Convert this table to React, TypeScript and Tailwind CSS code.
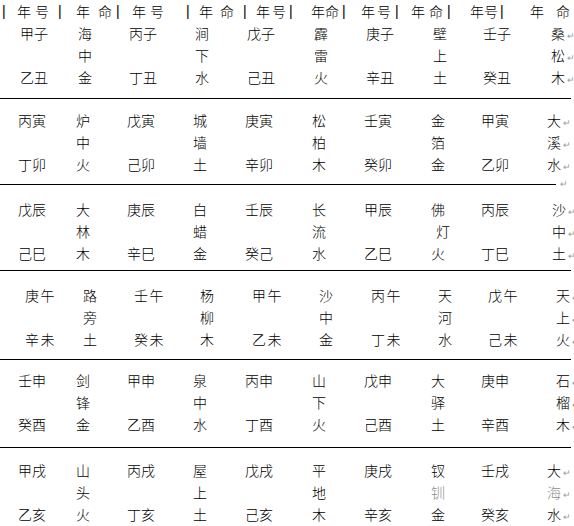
import React from "react";

const GRID =
  "grid grid-cols-[58px_51px_66px_52px_67px_52px_67px_50px_66px_1fr] leading-[22px]";

// header: pipes and "年 号 / 年 命" labels, each with its own slot width
const header: { w: string; inner?: string; chars: string[] }[] = [
  { w: "w-[15px]", chars: ["|"] },
  { w: "w-[41px]", inner: "w-[32px]", chars: ["年", "号"] },
  { w: "w-[18px]", chars: ["|"] },
  { w: "w-[40px]", inner: "w-[36px]", chars: ["年", "命"] },
  { w: "w-[16px]", chars: ["|"] },
  { w: "w-[54px]", inner: "w-[32px]", chars: ["年", "号"] },
  { w: "w-[13px]", chars: ["|"] },
  { w: "w-[44px]", inner: "w-[35px]", chars: ["年", "命"] },
  { w: "w-[13px]", chars: ["|"] },
  { w: "w-[33px]", inner: "w-[30px]", chars: ["年", "号"] },
  { w: "w-[22px]", chars: ["|"] },
  { w: "w-[31px]", inner: "w-[28px]", chars: ["年", "命"] },
  { w: "w-[19px]", chars: ["|"] },
  { w: "w-[34px]", inner: "w-[30px]", chars: ["年", "号"] },
  { w: "w-[16px]", chars: ["|"] },
  { w: "w-[36px]", inner: "w-[32px]", chars: ["年", "命"] },
  { w: "w-[23px]", chars: ["|"] },
  { w: "w-[30px]", inner: "w-[28px]", chars: ["年", "号"] },
  { w: "w-[30px]", chars: ["|"] },
  { w: "w-[43px]", inner: "w-[40px]", chars: ["年", "命"] },
];

type Group = {
  box: string;
  pl: string;
  last: string;
  track?: string;
  years: [string, string][];
  nayin: string[];
};

const groups: Group[] = [
  {
    box: "pt-0 pb-[10px]",
    pl: "pl-[20px]",
    last: "pl-[2px]",
    years: [["甲子", "乙丑"], ["丙子", "丁丑"], ["戊子", "己丑"], ["庚子", "辛丑"], ["壬子", "癸丑"]],
    nayin: ["海中金", "涧下水", "霹雷火", "壁上土", "桑松木"],
  },
  {
    box: "pt-[10px] pb-[9px]",
    pl: "pl-[18px]",
    last: "pl-0",
    years: [["丙寅", "丁卯"], ["戊寅", "己卯"], ["庚寅", "辛卯"], ["壬寅", "癸卯"], ["甲寅", "乙卯"]],
    nayin: ["炉中火", "城墙土", "松柏木", "金箔金", "大溪水"],
  },
  {
    box: "pt-[13px] pb-[6px]",
    pl: "pl-[18px]",
    last: "pl-[5px]",
    years: [["戊辰", "己巳"], ["庚辰", "辛巳"], ["壬辰", "癸己"], ["甲辰", "乙巳"], ["丙辰", "丁巳"]],
    nayin: ["大林木", "白蜡金", "长流水", "佛灯火", "沙中土"],
  },
  {
    box: "pt-[13px] pb-[9px]",
    pl: "pl-[25px]",
    last: "pl-[2px]",
    track: "tracking-[1.5px]",
    years: [["庚午", "辛未"], ["壬午", "癸未"], ["甲午", "乙未"], ["丙午", "丁未"], ["戊午", "己未"]],
    nayin: ["路旁土", "杨柳木", "沙中金", "天河水", "天上火"],
  },
  {
    box: "pt-[9px] pb-[12px]",
    pl: "pl-[18px]",
    last: "pl-[9px]",
    years: [["壬申", "癸酉"], ["甲申", "乙酉"], ["丙申", "丁酉"], ["戊申", "己酉"], ["庚申", "辛酉"]],
    nayin: ["剑锋金", "泉中水", "山下火", "大驿土", "石榴木"],
  },
  {
    box: "pt-[11px] pb-0",
    pl: "pl-[18px]",
    last: "pl-0",
    years: [["甲戌", "乙亥"], ["丙戌", "丁亥"], ["戊戌", "己亥"], ["庚戌", "辛亥"], ["壬戌", "癸亥"]],
    nayin: ["山头火", "屋上土", "平地木", "钗钏金", "大海水"],
  },
];

// odd cells that sit off the column or print lighter in the scan
const special: Record<string, string> = {
  "2-3-1": "pl-[5px]",
  "5-3-1": "text-[#8a8a8a]",
  "5-4-1": "text-[#8a8a8a]",
};

const lines = ["w-[571px]", "w-[556px]", "w-[571px]", "w-[571px]", "w-[571px]"];

function Mark() {
  return <span className="ml-[2px] text-[9px] text-[#9a9a9a] font-['DejaVu_Sans',sans-serif]">↵</span>;
}

function GroupBlock({ g, gi }: { g: Group; gi: number }) {
  const cells: React.ReactNode[] = [];
  for (let r = 0; r < 3; r++) {
    g.years.forEach((pair, p) => {
      const y = r === 0 ? pair[0] : r === 2 ? pair[1] : "";
      cells.push(
        <div key={`y${r}-${p}`} className={`h-[22px] whitespace-nowrap ${g.track ?? ""}`}>
          {y}
        </div>
      );
      const isLast = p === 4;
      cells.push(
        <div
          key={`n${r}-${p}`}
          className={`h-[22px] whitespace-nowrap ${isLast ? g.last : ""} ${special[`${gi}-${p}-${r}`] ?? ""}`}
        >
          {g.nayin[p][r]}
          {isLast && <Mark />}
        </div>
      );
    });
  }
  return <div className={`${GRID} ${g.box} ${g.pl}`}>{cells}</div>;
}

export default function App() {
  return (
    <div className="w-[574px] h-[526px] overflow-hidden bg-white text-black text-[14px] font-light font-['Noto_Sans_CJK_SC',sans-serif]">
      <div className="flex h-[22px] items-center pl-[2px] leading-[22px] whitespace-nowrap">
        {header.map((h, i) =>
          h.inner ? (
            <div key={i} className={`${h.w} shrink-0`}>
              <div className={`${h.inner} flex justify-between`}>
                {h.chars.map((c, j) => (
                  <span key={j}>{c}</span>
                ))}
              </div>
            </div>
          ) : (
            <div key={i} className={`${h.w} shrink-0 font-['Liberation_Sans',sans-serif] font-normal text-[14px]`}>
              {h.chars[0]}
            </div>
          )
        )}
      </div>
      {groups.map((g, gi) => (
        <React.Fragment key={gi}>
          <GroupBlock g={g} gi={gi} />
          {gi < groups.length - 1 && (
            <div className="flex items-center h-px">
              <div className={`${lines[gi]} h-px bg-black`} />
              {gi === 1 && <span className="ml-[4px] text-[9px] text-[#9a9a9a] font-['DejaVu_Sans',sans-serif]">↵</span>}
            </div>
          )}
        </React.Fragment>
      ))}
    </div>
  );
}
